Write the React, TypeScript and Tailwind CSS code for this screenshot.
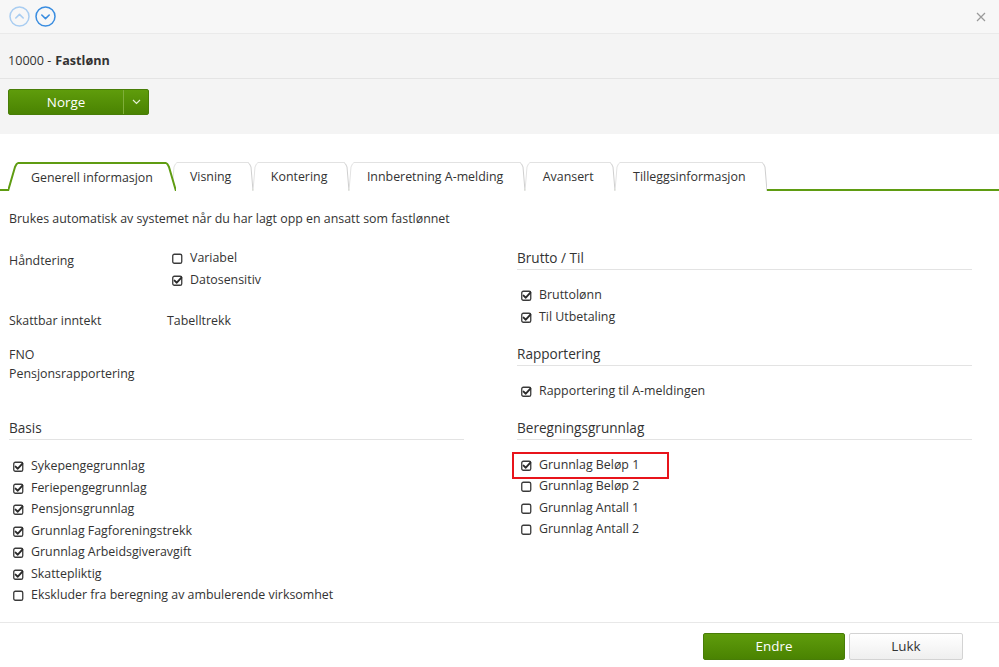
import React from "react";

const font = { fontFamily: '"Open Sans", "Noto Sans", sans-serif' };

function CheckIcon({ checked }: { checked: boolean }) {
  return (
    <svg width="11" height="11" viewBox="0 0 11 11" className="shrink-0">
      <rect x="0.75" y="1.25" width="9" height="9" rx="1.6" fill="none" stroke="#3a3a3a" strokeWidth="1.3" />
      {checked && (
        <path d="M2.6 5.6 L4.8 7.7 L9.4 2.6" fill="none" stroke="#2a2a2a" strokeWidth="1.9" strokeLinecap="round" strokeLinejoin="round" />
      )}
    </svg>
  );
}

function Check({ label, checked, className = "" }: { label: string; checked: boolean; className?: string }) {
  return (
    <div className={"flex items-center gap-[7px] h-[21.5px] " + className}>
      <CheckIcon checked={checked} />
      <span>{label}</span>
    </div>
  );
}

function Heading({ children }: { children: React.ReactNode }) {
  return (
    <div className="text-[13.6px] text-[#333] border-b border-[#e3e3e3] pb-[1px] leading-[20px]">{children}</div>
  );
}

function Tab({ label, active, className = "" }: { label: string; active?: boolean; className?: string }) {
  const stroke = active ? "#5f9c12" : "#e2e2e2";
  const sw = active ? 2 : 1;
  const slant = active ? 10 : 5;
  return (
    <div className={"relative flex h-[29px] " + (active ? "z-10" : "") + " " + className}>
      <svg width={slant} height="29" viewBox={`0 0 ${slant} 29`} className="shrink-0 block">
        <path
          d={`M0 29 L0 29 L${slant - 3} 5 Q${slant - 1.5} ${sw / 2 + 0.5} ${slant} ${sw / 2} L${slant} 29 Z`}
          fill="#fff"
        />
        <path
          d={`M0 29 L${slant - 3} 5 Q${slant - 1.5} ${sw / 2 + 0.5} ${slant} ${sw / 2}`}
          fill="none"
          stroke={stroke}
          strokeWidth={sw}
        />
      </svg>
      <div
        className={
          "flex items-center bg-white text-[12.4px] text-[#333] pt-[1px] " +
          (active ? "border-t-2 border-[#5f9c12] px-[13px] h-[30px]" : "border-t border-[#e2e2e2] pl-[13px] pr-[16.5px]")
        }
      >
        {label}
      </div>
      <svg width={slant} height="29" viewBox={`0 0 ${slant} 29`} className="shrink-0 block">
        <path d={`M${slant} 29 L3 5 Q1.5 ${sw / 2 + 0.5} 0 ${sw / 2} L0 29 Z`} fill="#fff" />
        <path d={`M${slant} 29 L3 5 Q1.5 ${sw / 2 + 0.5} 0 ${sw / 2}`} fill="none" stroke={active ? stroke : "#cfcfcf"} strokeWidth={sw} />
      </svg>
    </div>
  );
}

export default function App() {
  return (
    <div className="w-[999px] h-[667px] bg-white text-[#333] text-[12.4px] flex flex-col overflow-hidden" style={font}>
      {/* top bar */}
      <div className="h-[34px] bg-[#f7f7f7] border-b border-[#eaeaea] flex items-center px-[9px] shrink-0">
        <div className="flex items-center gap-[5px] -mt-[1px]">
          <svg width="21" height="21" viewBox="0 0 21 21">
            <circle cx="10.5" cy="10.5" r="9.5" fill="none" stroke="#a9cdf1" strokeWidth="1.5" />
            <path d="M6.8 12 L10.5 8.4 L14.2 12" fill="none" stroke="#a9cdf1" strokeWidth="1.6" strokeLinecap="round" strokeLinejoin="round" />
          </svg>
          <svg width="21" height="21" viewBox="0 0 21 21">
            <circle cx="10.5" cy="10.5" r="9.5" fill="none" stroke="#3a8de0" strokeWidth="1.5" />
            <path d="M6.8 9 L10.5 12.6 L14.2 9" fill="none" stroke="#3a8de0" strokeWidth="1.6" strokeLinecap="round" strokeLinejoin="round" />
          </svg>
        </div>
        <div className="ml-auto mr-[4px]">
          <svg width="10" height="10" viewBox="0 0 10 10">
            <path d="M1 1 L9 9 M9 1 L1 9" stroke="#9a9a9a" strokeWidth="1.2" />
          </svg>
        </div>
      </div>

      {/* title */}
      <div className="h-[45px] bg-[#f4f4f4] border-b border-[#e4e4e4] flex items-center px-[8px] pt-[11px] shrink-0 text-[12.6px]">
        10000 - <span className="font-bold ml-[4px]">Fastlønn</span>
      </div>

      {/* country button */}
      <div className="h-[55px] bg-[#f4f4f4] px-[8px] pt-[10px] shrink-0">
        <div className="flex h-[26px] w-[141px] rounded-[2px] border border-[#487d07] bg-gradient-to-b from-[#5f9c0c] to-[#4a8302] text-white text-[13.4px]">
          <div className="flex-1 flex items-center justify-center">Norge</div>
          <div className="w-[25px] border-l border-[#7fae3a] flex items-center justify-center">
            <svg width="9" height="6" viewBox="0 0 9 6">
              <path d="M1 1 L4.5 4.5 L8 1" fill="none" stroke="#e4efd6" strokeWidth="1.2" />
            </svg>
          </div>
        </div>
      </div>

      {/* tabs */}
      <div className="mt-[27px] flex items-end border-b-2 border-[#5f9c12] h-[30px] pl-[8px] shrink-0">
        <div className="flex items-end -mb-[2px]">
          <Tab label="Generell informasjon" active />
          <Tab label="Visning" className="-ml-[4px]" />
          <Tab label="Kontering" />
          <Tab label="Innberetning A-melding" />
          <Tab label="Avansert" />
          <Tab label="Tilleggsinformasjon" />
        </div>
      </div>

      {/* content */}
      <div className="px-[9px] flex-1">
        <div className="mt-[18px] leading-[20px]">Brukes automatisk av systemet når du har lagt opp en ansatt som fastlønnet</div>

        <div className="mt-[19px] grid grid-cols-[455px_455px] gap-x-[53px]">
          {/* left */}
          <div>
            <div className="flex">
              <div className="w-[158px] pt-[3px] leading-[20px]">Håndtering</div>
              <div className="ml-[5px]">
                <Check label="Variabel" checked={false} />
                <Check label="Datosensitiv" checked />
              </div>
            </div>
            <div className="flex mt-[20px] leading-[20px]">
              <div className="w-[158px]">Skattbar inntekt</div>
              <div>Tabelltrekk</div>
            </div>
            <div className="mt-[14px] leading-[19px]">
              <div>FNO</div>
              <div>Pensjonsrapportering</div>
            </div>
            <div className="mt-[35px]">
              <Heading>Basis</Heading>
            </div>
            <div className="mt-[16px] pl-[4px]">
              <Check label="Sykepengegrunnlag" checked />
              <Check label="Feriepengegrunnlag" checked />
              <Check label="Pensjonsgrunnlag" checked />
              <Check label="Grunnlag Fagforeningstrekk" checked />
              <Check label="Grunnlag Arbeidsgiveravgift" checked />
              <Check label="Skattepliktig" checked />
              <Check label="Ekskluder fra beregning av ambulerende virksomhet" checked={false} />
            </div>
          </div>

          {/* right */}
          <div>
            <Heading>Brutto / Til</Heading>
            <div className="mt-[15px] pl-[4px]">
              <Check label="Bruttolønn" checked />
              <Check label="Til Utbetaling" checked />
            </div>
            <div className="mt-[16px]">
              <Heading>Rapportering</Heading>
            </div>
            <div className="mt-[15px] pl-[4px]">
              <Check label="Rapportering til A-meldingen" checked />
            </div>
            <div className="mt-[15px]">
              <Heading>Beregningsgrunnlag</Heading>
            </div>
            <div className="mt-[15px] pl-[4px]">
              <div className="relative">
                <Check label="Grunnlag Beløp 1" checked />
                <div className="absolute -left-[9px] -top-[3px] w-[157px] h-[27px] border-2 border-[#e8141b] pointer-events-none" />
              </div>
              <Check label="Grunnlag Beløp 2" checked={false} />
              <Check label="Grunnlag Antall 1" checked={false} />
              <Check label="Grunnlag Antall 2" checked={false} />
            </div>
          </div>
        </div>
      </div>

      {/* footer */}
      <div className="h-[45px] border-t border-[#e8e8e8] flex items-start justify-end gap-[4px] pt-[10px] pr-[36px] shrink-0">
        <button className="w-[142px] h-[27px] rounded-[2px] border border-[#487d07] bg-gradient-to-b from-[#5f9c0c] to-[#4a8302] text-white text-[13.4px]">
          Endre
        </button>
        <button className="w-[114px] h-[27px] rounded-[2px] border border-[#d3d3d3] bg-gradient-to-b from-white to-[#efefef] text-[#333] text-[13.4px]">
          Lukk
        </button>
      </div>
    </div>
  );
}
